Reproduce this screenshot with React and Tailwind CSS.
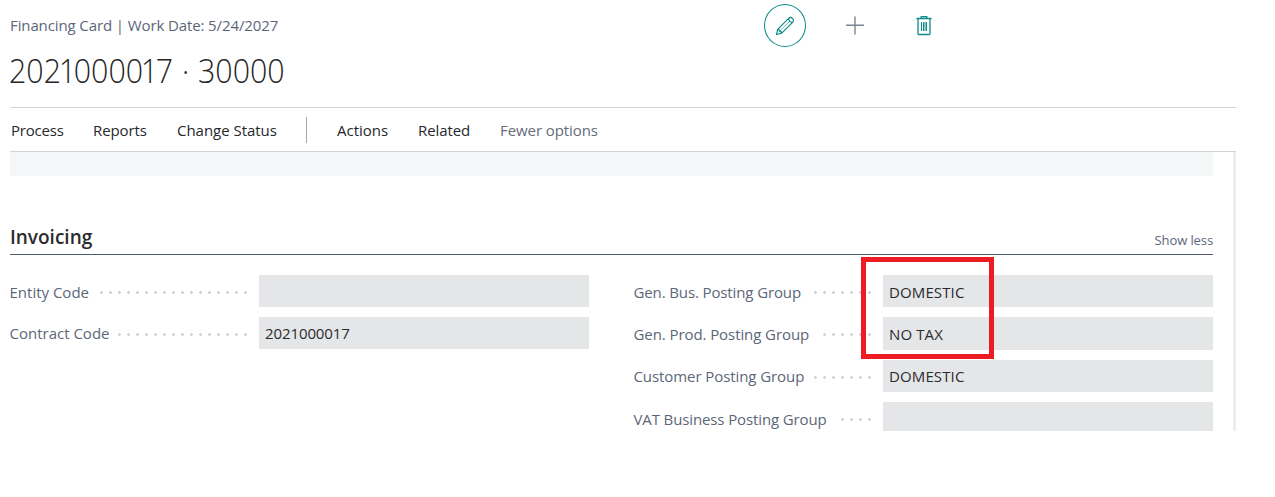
function Dots({ className = "" }) {
  return (
    <span
      className={`h-[3px] shrink-0 bg-[radial-gradient(circle,#c9cbd0_0.9px,transparent_1.6px)] bg-[length:9px_3px] bg-right bg-repeat-x ${className}`}
    />
  );
}

function Field({ label, labelClass = "", dotsClass, value, boxClass }) {
  return (
    <div className="flex items-center">
      <div className="flex w-[249px] shrink-0 items-center justify-between pr-[9px]">
        <span className={`-ml-[0.5px] whitespace-nowrap text-[15px] leading-5 text-[#5c6679] ${labelClass}`}>{label}</span>
        <Dots className={dotsClass} />
      </div>
      <div className={`flex flex-1 items-center bg-[#e5e6e8] pl-[6px] text-[15px] text-[#2b2b2e] ${boxClass}`}>{value}</div>
    </div>
  );
}

export default function App() {
  return (
    <div className="h-[497px] w-[1275px] overflow-hidden bg-white pl-[10px] font-['Open_Sans','Noto_Sans',sans-serif]">
      <header className="flex h-[107px] w-[1226px] flex-col">
        <div className="flex h-[51px] items-center">
          <span className="w-[754px] whitespace-nowrap text-[15px] tracking-[-0.11px] text-[#5c6679]">Financing Card | Work Date: 5/24/2027</span>
          <span className="flex h-[43px] w-[42px] items-center justify-center rounded-[50%] border border-[#0d8a8c]">
            <svg width="20" height="20" viewBox="0 0 20 20" fill="none" stroke="#0d8a8c" strokeWidth="1.2" strokeLinejoin="round">
              <path d="M1.500 18.500L2.700 13.300L13.600 2.400Q15.600 .6 17.500 2.400T17.600 6.300L6.700 17.200ZM2.700 13.300Q4.500 13.200 4.600 15.300Q6.700 15.300 6.700 17.200M12.600 3.400Q14.600 3.200 14.500 5.500Q16.700 5.300 16.600 7.300" />
              <path d="M4.600 15.300L14.500 5.500" strokeWidth="0.6" />
            </svg>
          </span>
          <svg className="ml-[39px]" width="20" height="20" viewBox="0 0 20 20" fill="none" stroke="#7c8393" strokeWidth="1.4">
            <path d="M10 .5v18M1 9.300h18" />
          </svg>
          <svg className="ml-[51px]" width="16" height="20" viewBox="0 0 16 20" fill="none" stroke="#0d8a8c" strokeWidth="1.3">
            <path d="M.5 2.500h15M2 2.500v15.200q0 .8.800.8h10.400q.8 0 .8-.8V2.500M5 2.500V1.300q0-.8.800-.8h4.400q.8 0 .8.800v1.200" />
            <path d="M5.500 6v9M7.500 6v9M9 6v9M10.500 6v9" strokeWidth="1" />
          </svg>
        </div>
        <h1 className="-ml-px origin-left scale-x-[0.92] whitespace-nowrap text-[33px] font-light leading-[40px] text-[#262626] [word-spacing:1px]">
          202<span className="-mx-[2.5px]">1</span>0000<span className="-mx-[2.5px]">1</span>7 · 30000
        </h1>
      </header>
      <nav className="flex h-[45px] w-[1226px] items-center whitespace-nowrap border-y border-[#d2d3d7] text-[15px] text-[#26282c]">
        <span className="w-[83px] pl-px pt-[2px] tracking-[-0.2px]">Process</span>
        <span className="w-[84px] pt-[2px] tracking-[-0.1px]">Reports</span>
        <span className="w-[129px] pt-[2px] tracking-[-0.03px]">Change Status</span>
        <span className="h-[26px] w-px bg-[#a4a9b4]" />
        <span className="ml-[30px] w-[81px] pt-[2px]">Actions</span>
        <span className="w-[82px] pt-[2px] tracking-[-0.1px]">Related</span>
        <span className="pt-[2px] tracking-[-0.08px] text-[#666c7a]">Fewer options</span>
      </nav>
      <main className="h-[279px] w-[1226px] overflow-hidden border-r-[3px] border-[#ededee]">
        <div className="w-[1203px]">
          <div className="h-6 bg-[#f5f6f8]" />
          <div className="mt-[44px] flex h-[35px] items-end justify-between border-b border-[#505c6d] pb-[4px]">
            <h2 className="text-[19px] font-semibold leading-[26px] text-[#2b2b2e]">Invoicing</h2>
            <span className="text-[13px] leading-[20px] tracking-[-0.1px] text-[#5c6679]">Show less</span>
          </div>
          <div className="relative mt-5 flex items-start justify-between">
            <div className="flex w-[579px] flex-col gap-[10px]">
              <Field label="Entity Code" labelClass="pt-[2px]" dotsClass="mt-[2px] w-[151px]" boxClass="h-8" />
              <Field label="Contract Code" dotsClass="mt-[2px] w-[133px]" value={<span className="tracking-[-0.1px]">2021000017</span>} boxClass="h-8" />
            </div>
            <div className="flex w-[579px] flex-col gap-[10px]">
              <Field label="Gen. Bus. Posting Group" labelClass="pt-[2px] tracking-[-0.12px]" dotsClass="mt-[2px] w-[61px]" value="DOMESTIC" boxClass="h-8 pt-[2px] tracking-[0.12px]" />
              <Field label="Gen. Prod. Posting Group" labelClass="tracking-[-0.08px]" dotsClass="mt-[2px] w-[52px]" value="NO TAX" boxClass="h-[33px] pt-[2px] tracking-[0.12px]" />
              <Field label="Customer Posting Group" labelClass="tracking-[-0.08px]" dotsClass="mt-[2px] w-[61px]" value="DOMESTIC" boxClass="h-8 tracking-[0.12px]" />
              <Field label="VAT Business Posting Group" labelClass="tracking-[-0.12px]" dotsClass="mt-[2px] w-[34px]" boxClass="h-[33px]" />
            </div>
            <div className="absolute left-[851px] top-[-18px] h-[102px] w-[133px] border-[5px] border-[#ed1c24]" />
          </div>
        </div>
      </main>
    </div>
  );
}
